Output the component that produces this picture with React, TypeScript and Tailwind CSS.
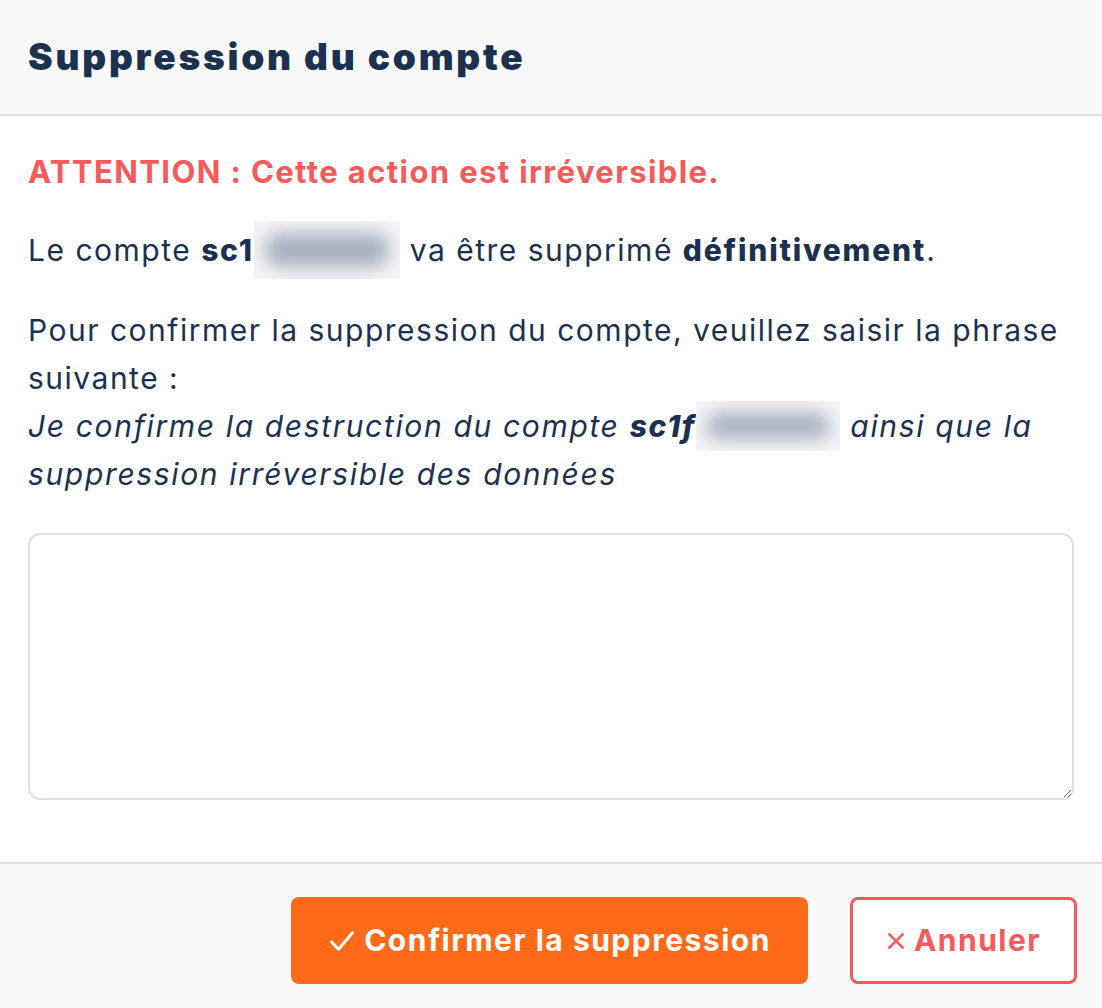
import React from "react";

function Redacted({ width, tall = 58 }: { width: number; tall?: number }) {
  return (
    <span className="relative inline-block h-[48px] align-top" style={{ width }}>
      <span
        className="absolute inset-x-0 overflow-hidden bg-[#f4f5f7]"
        style={{ top: (48 - tall) / 2, height: tall }}
      >
        <span className="absolute inset-x-[10px] inset-y-[12px] rounded-full bg-[#a7b0bd] blur-[9px]" />
      </span>
    </span>
  );
}

export default function App() {
  return (
    <div className="flex min-h-screen flex-col bg-white font-['Inter',sans-serif] text-[#1c3150]">
      <header className="flex h-[116px] items-center border-b-2 border-[#dee2e6] bg-[#f9f9f9] px-[28px]">
        <h1 className="text-[37px] font-black tracking-[0.075em]">Suppression du compte</h1>
      </header>

      <main className="px-[28px] pt-[32px] pb-[62px] text-[30px] leading-[48px] tracking-[0.05em]">
        <p className="text-[31px] font-bold tracking-[0.045em] text-[#f65a5a]">
          ATTENTION : Cette action est irréversible.
        </p>

        <p className="mt-[30px]">
          Le compte <strong className="font-extrabold tracking-[0.06em]">sc1</strong>
          <Redacted width={146} /> va être supprimé{" "}
          <strong className="font-extrabold tracking-[0.06em]">définitivement</strong>.
        </p>

        <p className="mt-[32px]">
          Pour confirmer la suppression du compte, veuillez saisir la phrase suivante :
          <br />
          <em className="tracking-[0.055em]">
            Je confirme la destruction du compte{" "}
            <strong className="font-extrabold">sc1f</strong>
            <Redacted width={144} tall={50} /> ainsi que la suppression irréversible des données
          </em>
        </p>

        <textarea className="mt-[35px] block h-[267px] w-full rounded-[12px] border-2 border-[#dee2e6] bg-white p-3 text-[28px] outline-none" />
      </main>

      <footer className="flex flex-1 items-start justify-end gap-[42px] border-t-2 border-[#dee2e6] bg-[#f9f9f9] pt-[33px] pr-[25px]">
        <button className="flex h-[87px] w-[517px] items-center justify-center gap-[8px] rounded-[8px] bg-[#ff6a19] text-[30px] font-bold tracking-[0.05em] text-white">
          <svg width="28" height="28" viewBox="0 0 24 24" fill="none" stroke="currentColor" strokeWidth="2.6" strokeLinecap="round" strokeLinejoin="round">
            <polyline points="3,13 9,19 21,5" />
          </svg>
          Confirmer la suppression
        </button>
        <button className="flex h-[87px] w-[227px] items-center justify-center gap-[8px] rounded-[8px] border-[3px] border-[#f65a5a] bg-white text-[30px] font-bold tracking-[0.05em] text-[#f65a5a]">
          <svg width="20" height="20" viewBox="0 0 24 24" fill="none" stroke="currentColor" strokeWidth="3.2" strokeLinecap="round">
            <line x1="4" y1="4" x2="20" y2="20" />
            <line x1="20" y1="4" x2="4" y2="20" />
          </svg>
          Annuler
        </button>
      </footer>
    </div>
  );
}
